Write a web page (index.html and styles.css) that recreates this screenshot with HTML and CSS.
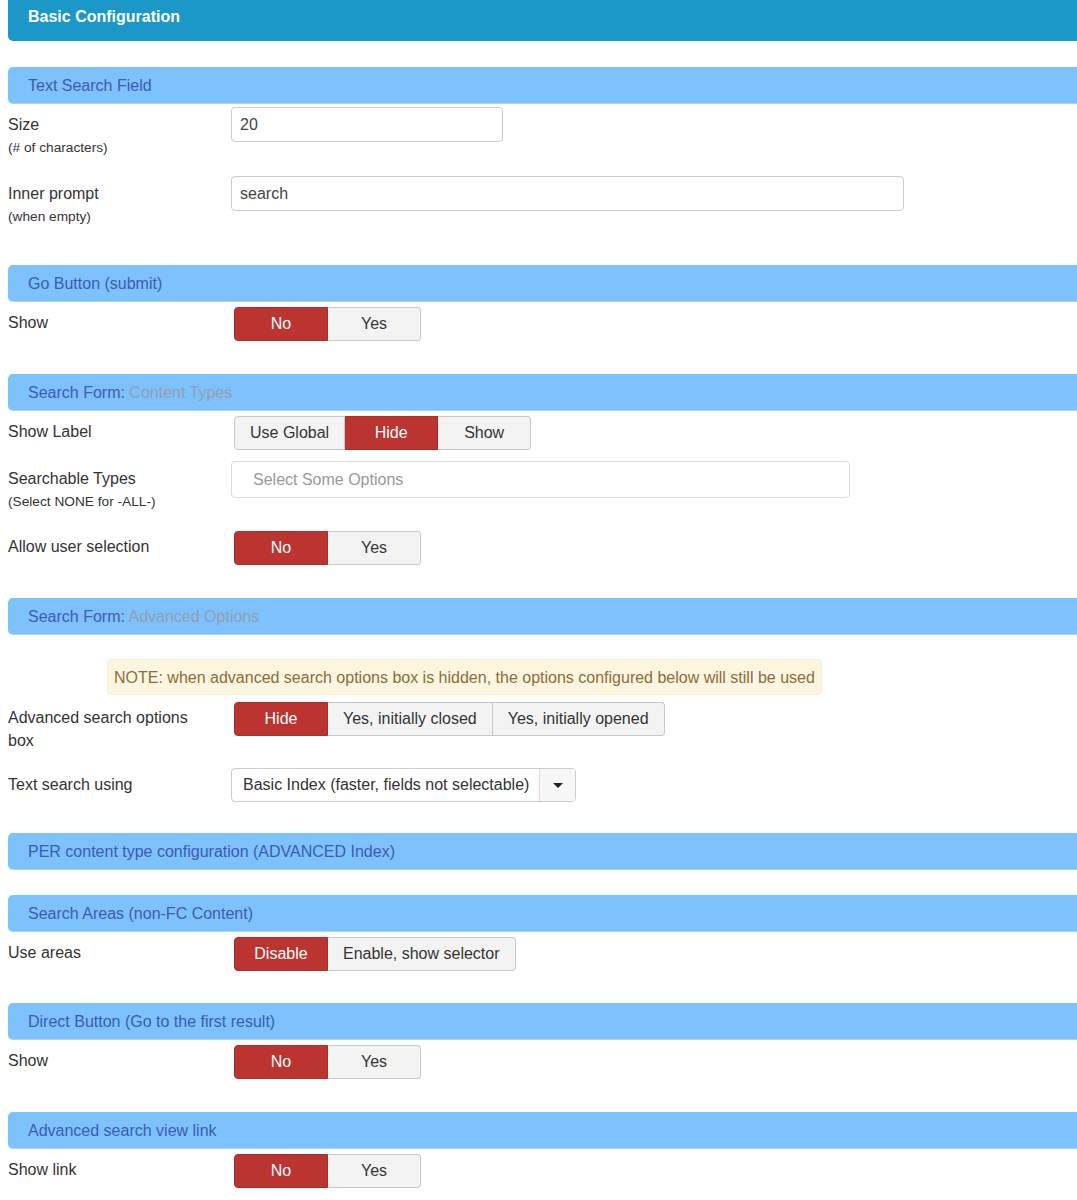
FILE: index.html
```html
<!DOCTYPE html>
<html>
<head>
<meta charset="utf-8">
<link rel="stylesheet" href="styles.css">
</head>
<body>
<div class="page">
  <div class="main-header">Basic Configuration</div>

  <div class="bar first">Text Search Field</div>
  <div class="row r-size">
    <div class="label">Size<div class="sub">(# of characters)</div></div>
    <div class="input short">20</div>
  </div>
  <div class="row r-prompt">
    <div class="label">Inner prompt<div class="sub">(when empty)</div></div>
    <div class="input long">search</div>
  </div>

  <div class="bar g40">Go Button (submit)</div>
  <div class="row">
    <div class="label">Show</div>
    <div class="group"><span class="btn on">No</span><span class="btn">Yes</span></div>
  </div>

  <div class="bar g33">Search Form: <span class="muted">Content Types</span></div>
  <div class="row r-showlabel">
    <div class="label">Show Label</div>
    <div class="group"><span class="btn">Use Global</span><span class="btn on">Hide</span><span class="btn">Show</span></div>
  </div>
  <div class="row r-types">
    <div class="label">Searchable Types<div class="sub">(Select NONE for -ALL-)</div></div>
    <div class="multiselect">Select Some Options</div>
  </div>
  <div class="row">
    <div class="label">Allow user selection</div>
    <div class="group"><span class="btn on">No</span><span class="btn">Yes</span></div>
  </div>

  <div class="bar g33">Search Form: <span class="muted">Advanced Options</span></div>
  <div class="note-wrap"><div class="note">NOTE: when advanced search options box is hidden, the options configured below will still be used</div></div>
  <div class="row r-adv">
    <div class="label">Advanced search options box</div>
    <div class="group"><span class="btn on">Hide</span><span class="btn">Yes, initially closed</span><span class="btn">Yes, initially opened</span></div>
  </div>
  <div class="row">
    <div class="label">Text search using</div>
    <div class="select"><span class="select-text">Basic Index (faster, fields not selectable)</span><span class="select-arrow"><span class="caret"></span></span></div>
  </div>

  <div class="bar g31">PER content type configuration (ADVANCED Index)</div>

  <div class="bar g25">Search Areas (non-FC Content)</div>
  <div class="row">
    <div class="label">Use areas</div>
    <div class="group"><span class="btn on">Disable</span><span class="btn">Enable, show selector</span></div>
  </div>

  <div class="bar g32">Direct Button (Go to the first result)</div>
  <div class="row">
    <div class="label">Show</div>
    <div class="group"><span class="btn on">No</span><span class="btn">Yes</span></div>
  </div>

  <div class="bar g33">Advanced search view link</div>
  <div class="row">
    <div class="label">Show link</div>
    <div class="group"><span class="btn on">No</span><span class="btn">Yes</span></div>
  </div>
</div>
</body>
</html>
```

FILE: styles.css
```css
html, body {
  margin: 0;
  padding: 0;
  background: #ffffff;
  overflow: hidden;
}
body {
  font-family: "Liberation Sans", Arial, sans-serif;
  font-size: 16px;
  color: #333333;
}
.page {
  margin-left: 8px;
  width: 1085px;
}
.main-header {
  background: #1b98c8;
  color: #ffffff;
  font-weight: bold;
  font-size: 16px;
  line-height: 20px;
  height: 41px;
  box-sizing: border-box;
  padding: 7px 20px 0 20px;
  border-radius: 0 0 0 5px;
}
.bar {
  background: #7dc1fd;
  color: #3c5bb5;
  height: 37px;
  line-height: 36px;
  box-sizing: border-box;
  padding-left: 20px;
  padding-top: 1px;
  border-radius: 5px 0 0 5px;
  border-bottom: 1px solid #a6d3fb;
  margin-bottom: 3px;
}
.bar.first { margin-top: 26px; }
.bar.g40 { margin-top: 40px; }
.bar.g33 { margin-top: 33px; }
.bar.g31 { margin-top: 31px; }
.bar.g25 { margin-top: 25px; }
.bar.g32 { margin-top: 32px; }
.muted { color: #949fab; }

.row {
  display: flex;
  align-items: flex-start;
}
.label {
  width: 223px;
  flex: none;
  padding-top: 6px;
  line-height: 23px;
  box-sizing: border-box;
  padding-right: 20px;
}
.sub {
  font-size: 13.7px;
  line-height: 17px;
  margin-top: 3px;
}
.r-size { margin-bottom: 20px; }
.r-showlabel { margin-bottom: 11px; }
.r-types { margin-bottom: 19px; }
.r-adv { margin-bottom: 15px; }
.r-adv .label { padding-right: 30px; }

.input {
  height: 35px;
  box-sizing: border-box;
  border: 1px solid #cccccc;
  border-radius: 4px;
  padding-left: 8px;
  line-height: 33px;
  color: #444;
}
.input.short { width: 272px; }
.input.long { width: 673px; }

.multiselect {
  width: 619px;
  height: 37px;
  box-sizing: border-box;
  border: 1px solid #dcdcdc;
  border-radius: 4px;
  padding-left: 21px;
  line-height: 35px;
  color: #999999;
}

.group {
  display: flex;
  margin-top: 2px;
  margin-left: 3px;
  height: 34px;
}
.btn {
  display: flex;
  align-items: center;
  justify-content: center;
  box-sizing: border-box;
  min-width: 93px;
  padding: 0 15px;
  background: #f3f3f3;
  border: 1px solid #c8c8c8;
  border-left: none;
  color: #333333;
}
.btn:first-child {
  border-left: 1px solid #c8c8c8;
  border-radius: 4px 0 0 4px;
  min-width: 94px;
}
.btn:last-child {
  border-radius: 0 4px 4px 0;
}
.btn.on {
  background: #bb3430;
  border-color: #a92c29;
  color: #ffffff;
}

.note-wrap {
  margin-top: 24px;
  padding-left: 99px;
  margin-bottom: 5px;
}
.note {
  display: inline-block;
  background: #fcf6e1;
  color: #8a6d3b;
  height: 36px;
  line-height: 35px;
  padding: 0 6px;
  border-radius: 4px;
  border: 1px solid #f8efd2;
  box-sizing: border-box;
}

.select {
  display: flex;
  margin-top: 1px;
  height: 34px;
  width: 345px;
  box-sizing: border-box;
  border: 1px solid #cccccc;
  border-radius: 4px;
  overflow: hidden;
}
.select-text {
  flex: 1;
  padding-left: 11px;
  line-height: 32px;
  white-space: nowrap;
}
.select-arrow {
  width: 35px;
  border-left: 1px solid #dddddd;
  background: #f7f7f7;
  display: flex;
  align-items: center;
  justify-content: center;
}
.caret {
  width: 0;
  height: 0;
  border-left: 5px solid transparent;
  border-right: 5px solid transparent;
  border-top: 5px solid #222222;
}
```
